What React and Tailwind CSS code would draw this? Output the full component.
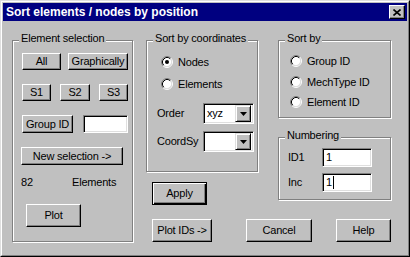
import React from 'react';

const font = { fontFamily: '"Liberation Sans", Arial, sans-serif' };

// raised win95 push button
const Btn = ({ className = '', children, isDefault = false }) => (
    <button
        type="button"
        className={
            isDefault
                ? `flex items-center justify-center border border-black shadow-[inset_1px_1px_0_#fff,inset_-1px_-1px_0_#000,inset_-2px_-2px_0_#808080] ${className}`
                : `flex items-center justify-center border border-t-white border-l-white border-r-black border-b-black shadow-[inset_-1px_-1px_0_#808080] ${className}`
        }
    >
        {children}
    </button>
);

// etched group box with caption
const Group = ({ label, className = '', children }) => (
    <div className={`relative border border-[#808080] shadow-[inset_1px_1px_0_#fff,1px_1px_0_#fff] ${className}`}>
        <span className="absolute -top-[9px] left-[6px] bg-[#c0c0c0] px-[2px] leading-[13px]">{label}</span>
        {children}
    </div>
);

const Sunken = ({ className = '', children }) => (
    <div className={`flex items-center bg-white border border-t-[#808080] border-l-[#808080] border-b-white border-r-white shadow-[inset_1px_1px_0_#000,inset_-1px_-1px_0_#dfdfdf] ${className}`}>
        {children}
    </div>
);

const Radio = ({ checked, label }) => (
    <div className="flex h-[16px] items-center gap-[5px]">
        <svg width="12" height="12" viewBox="0 0 12 12" className="shrink-0">
            <circle cx="6" cy="6" r="4.5" fill="#fff" />
            <path d="M2.11 9.89 A5.5 5.5 0 0 1 9.89 2.11" fill="none" stroke="#808080" strokeWidth="1" />
            <path d="M9.89 2.11 A5.5 5.5 0 0 1 2.11 9.89" fill="none" stroke="#fff" strokeWidth="1" />
            <path d="M2.82 9.18 A4.5 4.5 0 0 1 9.18 2.82" fill="none" stroke="#000" strokeWidth="1" />
            <path d="M9.18 2.82 A4.5 4.5 0 0 1 2.82 9.18" fill="none" stroke="#dfdfdf" strokeWidth="1" />
            {checked && <circle cx="6" cy="6" r="2" fill="#000" />}
        </svg>
        <span className="leading-[13px]">{label}</span>
    </div>
);

const Combo = ({ value, className = '' }) => (
    <Sunken className={`h-[21px] w-[51px] justify-between pl-[3px] pr-[2px] ${className}`}>
        <span className="leading-[13px]">{value}</span>
        <div className="flex h-[17px] w-[16px] items-center justify-center border border-t-[#dfdfdf] border-l-[#dfdfdf] border-r-black border-b-black bg-[#c0c0c0] shadow-[inset_1px_1px_0_#fff,inset_-1px_-1px_0_#808080]">
            <svg width="7" height="4" viewBox="0 0 7 4">
                <path d="M0 0 H7 L3.5 4 Z" fill="#000" />
            </svg>
        </div>
    </Sunken>
);

const App = () => {
    return (
        <div
            className="h-[257px] w-[410px] border border-t-[#dfdfdf] border-l-[#dfdfdf] border-r-black border-b-black bg-[#c0c0c0] text-[11px] tracking-[-0.2px] text-black"
            style={font}
        >
            <div className="h-full border border-t-white border-l-white border-r-[#808080] border-b-[#808080] p-[1px]">
                {/* Title bar */}
                <div className="flex h-[18px] items-center justify-between bg-[#000080] pl-[3px] pr-[2px]">
                    <span className="text-[12px] font-bold leading-[14px] tracking-normal text-white">
                        Sort elements / nodes by position
                    </span>
                    <div className="flex h-[14px] w-[16px] items-center justify-center border border-t-white border-l-white border-r-black border-b-black bg-[#c0c0c0] shadow-[inset_-1px_-1px_0_#808080]">
                        <svg width="8" height="7" viewBox="0 0 8 7">
                            <path d="M0.5 0.5 L7.5 6.5 M7.5 0.5 L0.5 6.5" stroke="#000" strokeWidth="1.6" />
                        </svg>
                    </div>
                </div>

                <div className="flex pl-[9px] pt-[19px]">
                    {/* Element selection */}
                    <Group label="Element selection" className="h-[202px] w-[121px] pl-[9px] pt-[12px]">
                        <div className="flex gap-[7px]">
                            <Btn className="h-[17px] w-[39px]">All</Btn>
                            <Btn className="h-[17px] w-[60px]">Graphically</Btn>
                        </div>
                        <div className="mt-[14px] flex w-[106px] justify-between">
                            <Btn className="h-[17px] w-[29px]">S1</Btn>
                            <Btn className="h-[17px] w-[30px]">S2</Btn>
                            <Btn className="h-[17px] w-[29px]">S3</Btn>
                        </div>
                        <div className="mt-[14px] flex items-center">
                            <Btn className="h-[18px] w-[51px]">Group ID</Btn>
                            <Sunken className="ml-[10px] h-[18px] w-[45px]" />
                        </div>
                        <Btn className="mt-[14px] -ml-[1px] h-[18px] w-[102px]">New selection -&gt;</Btn>
                        <div className="mt-[11px] flex leading-[13px]">
                            <span className="w-[51px] -ml-[1px]">82</span>
                            <span>Elements</span>
                        </div>
                        <Btn className="ml-[4px] mt-[15px] h-[23px] w-[55px]">Plot</Btn>
                    </Group>

                    <div className="ml-[13px] flex flex-col">
                        <div className="flex">
                            {/* Sort by coordinates + Apply */}
                            <div className="flex flex-col">
                                <Group label="Sort by coordinates" className="h-[132px] w-[112px] pt-[13px]">
                                    <div className="pl-[14px]">
                                        <Radio checked label="Nodes" />
                                        <div className="mt-[6px]">
                                            <Radio label="Elements" />
                                        </div>
                                    </div>
                                    <div className="mt-[11px] flex items-center pl-[10px]">
                                        <span className="w-[46px] leading-[13px]">Order</span>
                                        <Combo value="xyz" />
                                    </div>
                                    <div className="mt-[7px] flex items-center pl-[10px]">
                                        <span className="w-[46px] leading-[13px]">CoordSy</span>
                                        <Combo value="" />
                                    </div>
                                </Group>
                                <Btn isDefault className="ml-[6px] mt-[10px] h-[23px] w-[55px]">Apply</Btn>
                            </div>

                            {/* Sort by + Numbering */}
                            <div className="ml-[20px] flex flex-col">
                                <Group label="Sort by" className="h-[78px] w-[113px] pl-[11px] pt-[12px]">
                                    <Radio label="Group ID" />
                                    <div className="mt-[5px]">
                                        <Radio label="MechType ID" />
                                    </div>
                                    <div className="mt-[4px]">
                                        <Radio label="Element ID" />
                                    </div>
                                </Group>
                                <Group label="Numbering" className="mt-[19px] h-[63px] w-[113px] pl-[9px] pt-[10px]">
                                    <div className="flex items-center">
                                        <span className="w-[34px] leading-[13px]">ID1</span>
                                        <Sunken className="h-[19px] w-[50px] pl-[3px]">
                                            <span className="leading-[13px]">1</span>
                                        </Sunken>
                                    </div>
                                    <div className="mt-[6px] flex items-center">
                                        <span className="w-[34px] leading-[13px]">Inc</span>
                                        <Sunken className="h-[19px] w-[50px] pl-[3px]">
                                            <span className="leading-[13px]">1</span>
                                            <span className="ml-[1px] h-[13px] w-[1px] bg-black" />
                                        </Sunken>
                                    </div>
                                </Group>
                            </div>
                        </div>

                        {/* bottom buttons */}
                        <div className="mt-[14px] flex">
                            <Btn className="ml-[6px] h-[23px] w-[60px]">Plot IDs -&gt;</Btn>
                            <Btn className="ml-[34px] h-[23px] w-[66px]">Cancel</Btn>
                            <Btn className="ml-[24px] h-[23px] w-[55px]">Help</Btn>
                        </div>
                    </div>
                </div>
            </div>
        </div>
    );
};

export default App;
